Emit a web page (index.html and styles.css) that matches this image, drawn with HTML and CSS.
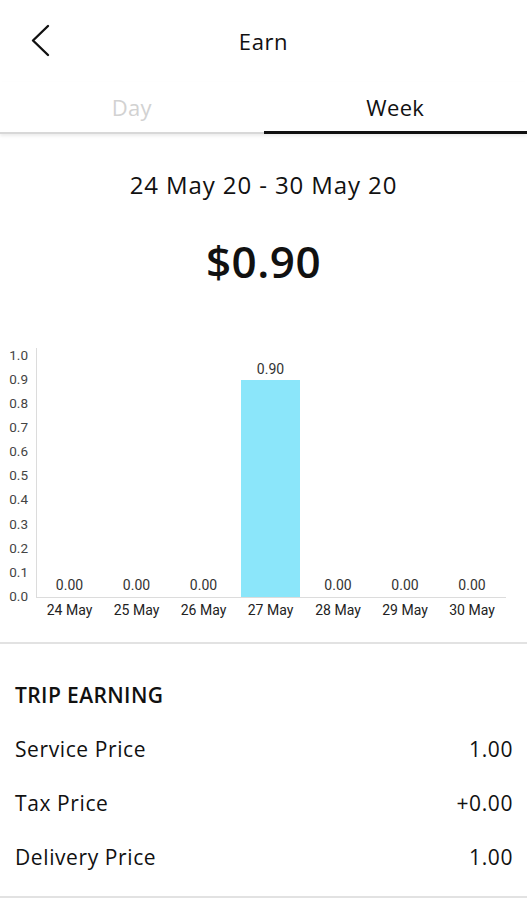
FILE: index.html
```html
<!DOCTYPE html>
<html lang="en">
<head>
  <meta charset="UTF-8" />
  <meta name="viewport" content="width=device-width, initial-scale=1.0"/>
  <title>Earn</title>
  <link rel="stylesheet" href="styles.css">
</head>
<body>
  <header class="topbar">
    <button class="back" aria-label="Back">
      <svg width="24" height="34" viewBox="0 0 24 34">
        <polyline points="19,2 4,16.5 19,31" fill="none" stroke="#111" stroke-width="2.4" stroke-linecap="round" stroke-linejoin="round"/>
      </svg>
    </button>
    <h1 class="title">Earn</h1>
    <span></span>
  </header>

  <nav class="tabs">
    <div class="tab">Day</div>
    <div class="tab active">Week</div>
  </nav>

  <section class="summary">
    <p class="range">24 May 20 - 30 May 20</p>
    <p class="amount">$0.90</p>
  </section>

  <section class="chart">
    <svg width="527" height="290" viewBox="0 0 527 290">
      <g class="ylabels" text-anchor="end">
        <text x="28" y="261">0.0</text>
        <text x="28" y="237">0.1</text>
        <text x="28" y="213">0.2</text>
        <text x="28" y="189">0.3</text>
        <text x="28" y="164">0.4</text>
        <text x="28" y="140">0.5</text>
        <text x="28" y="116">0.6</text>
        <text x="28" y="92">0.7</text>
        <text x="28" y="68">0.8</text>
        <text x="28" y="44">0.9</text>
        <text x="28" y="20">1.0</text>
      </g>
      <line x1="36.5" y1="8" x2="36.5" y2="257" stroke="#dcdcdc" stroke-width="1"/>
      <line x1="36" y1="257.5" x2="506" y2="257.5" stroke="#dcdcdc" stroke-width="1"/>
      <rect x="241" y="40" width="59" height="217" fill="#8be6fa"/>
      <g class="values" text-anchor="middle">
        <text x="69.5" y="250">0.00</text>
        <text x="136.5" y="250">0.00</text>
        <text x="203.5" y="250">0.00</text>
        <text x="270.5" y="34">0.90</text>
        <text x="338" y="250">0.00</text>
        <text x="405" y="250">0.00</text>
        <text x="472" y="250">0.00</text>
      </g>
      <g class="xlabels" text-anchor="middle">
        <text x="69.5" y="275">24 May</text>
        <text x="136.5" y="275">25 May</text>
        <text x="203.5" y="275">26 May</text>
        <text x="270.5" y="275">27 May</text>
        <text x="338" y="275">28 May</text>
        <text x="405" y="275">29 May</text>
        <text x="472" y="275">30 May</text>
      </g>
    </svg>
  </section>

  <section class="earnings">
    <h2>TRIP EARNING</h2>
    <div class="row"><span>Service Price</span><span>1.00</span></div>
    <div class="row"><span>Tax Price</span><span>+0.00</span></div>
    <div class="row"><span>Delivery Price</span><span>1.00</span></div>
  </section>
</body>
</html>
```

FILE: styles.css
```css
body {
  margin: 0;
  background: #fff;
  color: #111;
  font-family: "Open Sans", "Noto Sans", sans-serif;
  width: 527px;
}
.topbar {
  display: grid;
  grid-template-columns: 80px 1fr 80px;
  align-items: center;
  height: 82px;
}
.back {
  background: none;
  border: none;
  padding: 0 0 0 29px;
  height: 82px;
  display: flex;
  align-items: center;
  cursor: pointer;
}
.title {
  margin: 0;
  text-align: center;
  font-size: 22px;
  font-weight: 400;
  letter-spacing: 0.6px;
}
.tabs {
  display: flex;
  height: 50px;
  border-bottom: 2px solid #d8d8d8;
  box-shadow: 0 2px 3px rgba(0,0,0,0.08);
}
.tab {
  flex: 1;
  display: flex;
  align-items: center;
  justify-content: center;
  font-size: 22px;
  letter-spacing: 0.3px;
  color: #d2d2d2;
}
.tab.active {
  color: #111;
  border-bottom: 3px solid #111;
  margin-bottom: -2px;
}
.summary {
  text-align: center;
  padding-top: 32px;
}
.range {
  margin: 0;
  font-size: 24px;
  letter-spacing: 0.9px;
  line-height: 38px;
}
.amount {
  margin: 32px 0 0;
  font-size: 44px;
  font-weight: 600;
  letter-spacing: 0.5px;
  line-height: 50px;
}
.chart {
  padding-top: 54px;
  height: 302px;
}
.chart svg {
  display: block;
  font-family: Roboto, sans-serif;
}
.ylabels text {
  font-size: 13.5px;
  fill: #444;
}
.values text {
  font-size: 14px;
  fill: #333;
}
.xlabels text {
  font-size: 14px;
  fill: #222;
}
.earnings {
  border-top: 2px solid #e2e2e2;
  border-bottom: 2px solid #e2e2e2;
  padding: 24px 14px 12px 15px;
}
.earnings h2 {
  margin: 0;
  height: 54px;
  line-height: 54px;
  font-size: 21px;
  font-weight: 600;
  letter-spacing: 0.4px;
}
.row {
  display: flex;
  justify-content: space-between;
  height: 54px;
  align-items: center;
  font-size: 21px;
  letter-spacing: 0.6px;
}
```
